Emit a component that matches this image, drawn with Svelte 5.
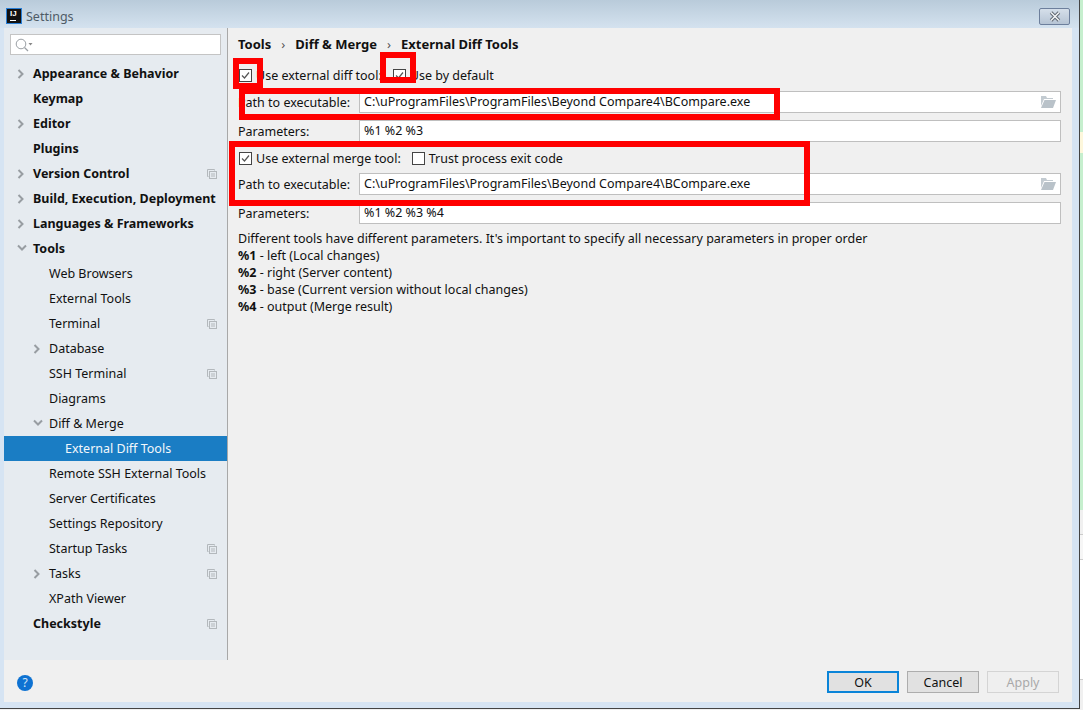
<script>
  const items = [
    { label: 'Appearance & Behavior', bold: true, arrow: 'right' },
    { label: 'Keymap', bold: true },
    { label: 'Editor', bold: true, arrow: 'right' },
    { label: 'Plugins', bold: true },
    { label: 'Version Control', bold: true, arrow: 'right', copy: true },
    { label: 'Build, Execution, Deployment', bold: true, arrow: 'right' },
    { label: 'Languages & Frameworks', bold: true, arrow: 'right' },
    { label: 'Tools', bold: true, arrow: 'down' },
    { label: 'Web Browsers', level: 1 },
    { label: 'External Tools', level: 1 },
    { label: 'Terminal', level: 1, copy: true },
    { label: 'Database', level: 1, arrow: 'right' },
    { label: 'SSH Terminal', level: 1, copy: true },
    { label: 'Diagrams', level: 1 },
    { label: 'Diff & Merge', level: 1, arrow: 'down' },
    { label: 'External Diff Tools', level: 2, selected: true },
    { label: 'Remote SSH External Tools', level: 1 },
    { label: 'Server Certificates', level: 1 },
    { label: 'Settings Repository', level: 1 },
    { label: 'Startup Tasks', level: 1, copy: true },
    { label: 'Tasks', level: 1, arrow: 'right', copy: true },
    { label: 'XPath Viewer', level: 1 },
    { label: 'Checkstyle', bold: true, copy: true }
  ];
  const path = 'C:\\uProgramFiles\\ProgramFiles\\Beyond Compare4\\BCompare.exe';
</script>

{#snippet check(on)}
  <span class="check">
    {#if on}
      <svg width="13" height="13" viewBox="0 0 13 13"><path d="M3 6.500 5.500 9 10 3.500" fill="none" stroke="#555" stroke-width="1.200" /></svg>
    {/if}
  </span>
{/snippet}

{#snippet folder()}
  <svg class="folder" width="16" height="12" viewBox="0 0 16 12">
    <path d="M1 0h5l1 2h6v1H4L1 10z" fill="#c3cbd1" />
    <path d="M4.500 4H16l-3 8H1z" fill="#b9c2c9" />
  </svg>
{/snippet}

<div class="desktop">
  <div class="window">
    <header class="titlebar">
      <span class="logo"><b>IJ</b><i></i></span>
      <span class="title">Settings</span>
      <button class="close" aria-label="Close">
        <svg width="16" height="11" viewBox="0 0 16 11"><path d="M4 1.500 12 9.500M12 1.500 4 9.500" stroke="#5e6670" stroke-width="3.400" /><path d="M4 1.500 12 9.500M12 1.500 4 9.500" stroke="#f4f6f8" stroke-width="1.500" /></svg>
      </button>
    </header>

    <div class="body">
      <div class="main">
        <aside class="sidebar">
          <div class="search">
            <svg width="18" height="14" viewBox="0 0 18 14">
              <circle cx="6" cy="6" r="4.800" fill="none" stroke="#9a9fa4" />
              <path d="M9.500 9.500 13 13" stroke="#9a9fa4" stroke-width="1.300" />
              <path d="M13.500 5h4l-2 2.500z" fill="#888" />
            </svg>
          </div>
          <ul>
            {#each items as item}
              <li class="row level{item.level ?? 0}" class:selected={item.selected} class:bold={item.bold}>
                {#if item.arrow === 'right'}
                  <svg class="arrow" width="8" height="10" viewBox="0 0 8 10"><path d="M1.500 1 5.500 5 1.500 9" fill="none" stroke="#989da2" stroke-width="2" /></svg>
                {:else if item.arrow === 'down'}
                  <svg class="arrow" width="10" height="8" viewBox="0 0 10 8"><path d="M1 1.500 5 5.500 9 1.500" fill="none" stroke="#989da2" stroke-width="2" /></svg>
                {/if}
                <span>{item.label}</span>
                {#if item.copy}
                  <svg class="copy" width="10" height="10" viewBox="0 0 10 10"><path d="M7.500 1.500V.5H.5v7h1" fill="none" stroke="#b3b8bc" /><rect x="2.500" y="2.500" width="7" height="7" fill="none" stroke="#b3b8bc" /><path d="M4 5h4M4 7h4" stroke="#b3b8bc" /></svg>
                {/if}
              </li>
            {/each}
          </ul>
        </aside>

        <section class="content">
          <nav class="crumbs">
            <b>Tools</b><span class="sep">›</span><b>Diff &amp; Merge</b><span class="sep">›</span><b>External Diff Tools</b>
          </nav>

          <div class="checks first">
            <label>{@render check(true)}Use external diff tool:</label>
            <label>{@render check(true)}Use by default</label>
          </div>
          <div class="field">
            <span>Path to executable:</span>
            <div class="input">{path}{@render folder()}</div>
          </div>
          <div class="field">
            <span>Parameters:</span>
            <div class="input">%1 %2 %3</div>
          </div>

          <div class="checks merge">
            <label>{@render check(true)}Use external merge tool:</label>
            <label>{@render check(false)}Trust process exit code</label>
          </div>
          <div class="field">
            <span>Path to executable:</span>
            <div class="input">{path}{@render folder()}</div>
          </div>
          <div class="field">
            <span>Parameters:</span>
            <div class="input">%1 %2 %3 %4</div>
          </div>

          <div class="help">
            <p>Different tools have different parameters. It's important to specify all necessary parameters in proper order</p>
            <p><b>%1</b> - left (Local changes)</p>
            <p><b>%2</b> - right (Server content)</p>
            <p><b>%3</b> - base (Current version without local changes)</p>
            <p><b>%4</b> - output (Merge result)</p>
          </div>
        </section>
      </div>

      <footer class="footer">
        <span class="help-btn">?</span>
        <div class="buttons">
          <button class="ok">OK</button>
          <button>Cancel</button>
          <button class="apply">Apply</button>
        </div>
      </footer>
    </div>
  </div>

  <!-- red marks someone drew over the screenshot -->
  <div class="mark" style="left:233px;top:58px;width:30px;height:31px"></div>
  <div class="mark" style="left:380px;top:52px;width:36px;height:31px"></div>
  <div class="mark" style="left:239px;top:88px;width:541px;height:32px"></div>
  <div class="mark" style="left:229px;top:141px;width:581px;height:65px"></div>
</div>

<style>
  :global(body) {
    margin: 0;
    overflow: hidden;
    font-family: "Noto Sans", "Liberation Sans", sans-serif;
    font-size: 12.5px;
    color: #111;
  }

  .desktop {
    position: relative;
    height: 710px;
    width: 1083px;
    background: linear-gradient(
      #c6efce 0 132px,
      #fdf7dc 132px 153px,
      #c6efce 153px 510px,
      #f0f0f0 510px 534px,
      #ccc 534px 535px,
      #f6f6f6 535px 559px,
      #ccc 559px 560px,
      #fff 560px 679px,
      #ccc 679px 680px,
      #f0f0f0 680px
    );
    overflow: hidden;
  }

  .window {
    box-sizing: border-box;
    width: 1080px;
    height: 709px;
    display: flex;
    flex-direction: column;
    background: #d6e4f3;
    border-right: 1px solid #444;
    border-bottom: 1px solid #444;
  }

  .titlebar {
    height: 28px;
    flex: none;
    display: flex;
    align-items: center;
    gap: 4px;
    padding: 4px 9px 0 6px;
    box-sizing: border-box;
    background: linear-gradient(#b9cbda, #d4e2ef);
  }

  .logo {
    position: relative;
    width: 14px;
    height: 14px;
    background: #111;
    border: 1px solid #2a7fd6;
    color: #fff;
    flex: none;
  }

  .logo b {
    position: absolute;
    left: 3px;
    top: 1px;
    font-family: "Liberation Sans", sans-serif;
    font-size: 8px;
    line-height: 8px;
  }

  .logo i {
    position: absolute;
    left: 3px;
    bottom: 2px;
    width: 6px;
    height: 1px;
    background: #fff;
  }

  .title {
    color: #4f5b66;
    font-size: 12.5px;
    margin-top: 1px;
  }

  .close {
    margin-left: auto;
    margin-top: 1px;
    width: 31px;
    height: 17px;
    padding: 0;
    display: flex;
    align-items: center;
    justify-content: center;
    background: linear-gradient(#d5dfea, #b6c4d4);
    border: 1px solid #6d7f9c;
    border-radius: 2px;
  }

  .body {
    flex: 1;
    margin: 0 7px 6px 4px;
    display: flex;
    flex-direction: column;
    background: #f0f0f0;
    min-height: 0;
  }

  .main {
    flex: 1;
    display: flex;
    min-height: 0;
  }

  .sidebar {
    width: 224px;
    box-sizing: border-box;
    flex: none;
    background: #e6ebf0;
    border-right: 1px solid #a8a8a8;
    padding-top: 6px;
  }

  .search {
    box-sizing: border-box;
    height: 21px;
    margin: 0 6px;
    background: #fff;
    border: 1px solid #c4c4c4;
    display: flex;
    align-items: center;
    padding-left: 4px;
  }

  ul {
    list-style: none;
    margin: 6px 0 0;
    padding: 0;
  }

  .row {
    position: relative;
    height: 25px;
    line-height: 25px;
    white-space: nowrap;
  }

  .row.bold {
    font-weight: 700;
  }

  .level0 { padding-left: 29px; }
  .level1 { padding-left: 45px; }
  .level2 { padding-left: 61px; }

  .row.selected {
    background: #1a7dc4;
    color: #f2f7fb;
  }

  .arrow {
    position: absolute;
    top: 8px;
    left: 13px;
  }

  .level1 .arrow {
    left: 29px;
  }

  .copy {
    position: absolute;
    top: 8px;
    right: 10px;
  }

  .content {
    flex: 1;
    padding: 0 11px 0 10px;
    min-width: 0;
  }

  .crumbs {
    height: 20px;
    margin-top: 6px;
    line-height: 20px;
    display: flex;
    font-size: 13px;
  }

  .sep {
    margin: 0 10px;
    color: #555;
  }

  .checks {
    display: flex;
    align-items: center;
    gap: 10px;
    height: 20px;
    margin-top: 11px;
  }

  .checks.merge {
    margin-top: 6px;
  }

  .checks label {
    display: flex;
    align-items: center;
    gap: 4px;
  }

  .check {
    box-sizing: border-box;
    width: 13px;
    height: 13px;
    margin-left: 1px;
    border: 1px solid #444;
    background: #fff;
    flex: none;
    display: block;
    line-height: 0;
  }

  .check svg {
    margin: -1px;
  }

  .field {
    display: grid;
    grid-template-columns: 121px 1fr;
    align-items: center;
    margin-top: 7px;
  }

  .checks + .field {
    margin-top: 5px;
  }

  .checks.first + .field {
    margin-top: 6px;
  }

  .input {
    position: relative;
    box-sizing: border-box;
    height: 22px;
    line-height: 20px;
    padding-left: 4px;
    background: #fff;
    border: 1px solid #bfbfbf;
  }

  .folder {
    position: absolute;
    right: 4px;
    top: 4px;
  }

  .help {
    margin-top: 6px;
  }

  .help p {
    margin: 0;
    height: 17px;
    line-height: 17px;
  }

  .footer {
    flex: none;
    box-sizing: border-box;
    height: 42px;
    display: flex;
    align-items: center;
    justify-content: space-between;
    padding: 2px 13px 0 13px;
  }

  .help-btn {
    width: 16px;
    height: 16px;
    margin-top: 1px;
    border-radius: 50%;
    background: #0e72d2;
    color: #d5e6f7;
    font-size: 12px;
    line-height: 16px;
    text-align: center;
  }

  .buttons {
    display: flex;
    gap: 8px;
  }

  button {
    font: inherit;
  }

  .buttons button {
    box-sizing: border-box;
    width: 72px;
    height: 22px;
    padding: 0;
    color: #111;
    background: #e1e1e1;
    border: 1px solid #adadad;
  }

  .buttons .ok {
    border: 2px solid #0a84d8;
  }

  .buttons .apply {
    color: #a9a9a9;
    background: #efefef;
    border-color: #d4d4d4;
  }

  .mark {
    position: absolute;
    box-sizing: border-box;
    border: 6px solid #f00;
  }
</style>
